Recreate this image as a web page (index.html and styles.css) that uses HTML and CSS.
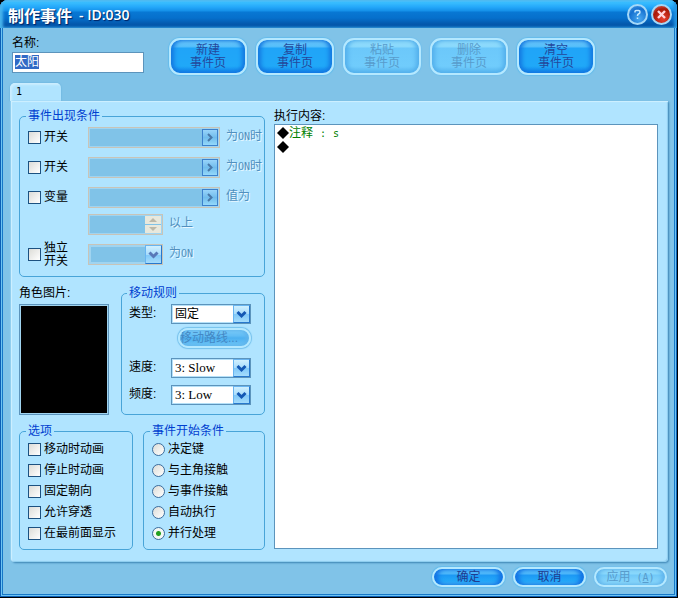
FILE: index.html
```html
<!DOCTYPE html>
<html lang="zh-CN">
<head>
<meta charset="utf-8">
<title>制作事件 - ID:030</title>
<link rel="stylesheet" href="styles.css">
</head>
<body>
<main class="window">
  <header class="titlebar">
    <h1><span>制作事件</span><span class="title-id">- ID:030</span></h1>
    <button class="round help" type="button" aria-label="帮助">
      <svg viewBox="0 0 17 17"><path d="M6 6.5V5.500Q6 4.500 7 4.500H9.500Q11 4.500 11 6Q11 7.500 9.500 8Q8.500 8.500 8.500 10M8.500 11.500V13" fill="none" stroke="#c4e8ff" stroke-width="1.500"/></svg>
    </button>
    <button class="round close" type="button" aria-label="关闭">
      <svg viewBox="0 0 17 17"><path d="M5 5L12 12M12 5L5 12" fill="none" stroke="#ffd5dc" stroke-width="2.400"/></svg>
    </button>
  </header>

  <section class="top">
    <div class="name">
      <label for="name">名称:</label>
      <div class="name-box"><input id="name" type="text" value="太阳" autofocus></div>
    </div>
    <div class="page-buttons">
      <button class="page-btn" type="button">新建<br>事件页</button>
      <button class="page-btn" type="button">复制<br>事件页</button>
      <button class="page-btn" type="button" disabled>粘贴<br>事件页</button>
      <button class="page-btn" type="button" disabled>删除<br>事件页</button>
      <button class="page-btn" type="button">清空<br>事件页</button>
    </div>
  </section>

  <nav class="tabs"><button class="tab" type="button">1</button></nav>

  <section class="panel">
    <div class="settings">
      <fieldset class="conditions">
        <legend>事件出现条件</legend>
        <div class="cond-grid">
          <label class="check"><input type="checkbox">开关</label>
          <div class="well picker"><button type="button" disabled aria-label="选择开关"><svg viewBox="0 0 14 15"><path d="M5 4L8.500 7.500L5 11"/></svg></button></div>
          <span class="dim">为<span class="half">ON</span>时</span>

          <label class="check"><input type="checkbox">开关</label>
          <div class="well picker"><button type="button" disabled aria-label="选择开关"><svg viewBox="0 0 14 15"><path d="M5 4L8.500 7.500L5 11"/></svg></button></div>
          <span class="dim">为<span class="half">ON</span>时</span>

          <label class="check"><input type="checkbox">变量</label>
          <div class="well picker"><button type="button" disabled aria-label="选择变量"><svg viewBox="0 0 14 15"><path d="M5 4L8.500 7.500L5 11"/></svg></button></div>
          <span class="dim">值为</span>

          <div class="short">
            <div class="well spinner">
              <input type="text" disabled aria-label="变量值">
              <span class="steps">
                <button type="button" disabled aria-label="增加"><svg viewBox="0 0 16 8"><path d="M4 6L8 2L12 6Z"/></svg></button>
                <button type="button" disabled aria-label="减少"><svg viewBox="0 0 16 8"><path d="M4 2L8 6L12 2Z"/></svg></button>
              </span>
            </div>
            <span class="dim">以上</span>
          </div>

          <label class="check"><input type="checkbox"><span>独立<br>开关</span></label>
          <div class="short">
            <span class="combo off">
              <select disabled aria-label="独立开关"><option></option></select>
              <span class="arrow"><svg viewBox="0 0 15 17"><path d="M3.500 6.500L7.500 10.500L11.500 6.500"/></svg></span>
            </span>
            <span class="dim">为<span class="half">ON</span></span>
          </div>
        </div>
      </fieldset>

      <div class="middle">
        <div class="portrait">
          <span>角色图片:</span>
          <div class="picture"></div>
        </div>
        <fieldset class="move">
          <legend>移动规则</legend>
          <div class="move-grid">
            <label for="type">类型:</label>
            <span class="combo">
              <select id="type"><option>固定</option></select>
              <span class="arrow"><svg viewBox="0 0 15 16"><path d="M3.500 6L7.500 10L11.500 6"/></svg></span>
            </span>
            <button class="pill route" type="button" disabled>移动路线...</button>
            <label for="speed">速度:</label>
            <span class="combo">
              <select id="speed" class="latin"><option>3: Slow</option></select>
              <span class="arrow"><svg viewBox="0 0 15 16"><path d="M3.500 6L7.500 10L11.500 6"/></svg></span>
            </span>
            <label for="freq">频度:</label>
            <span class="combo">
              <select id="freq" class="latin"><option>3: Low</option></select>
              <span class="arrow"><svg viewBox="0 0 15 16"><path d="M3.500 6L7.500 10L11.500 6"/></svg></span>
            </span>
          </div>
        </fieldset>
      </div>

      <div class="bottom">
        <fieldset class="choices">
          <legend>选项</legend>
          <label class="check"><input type="checkbox">移动时动画</label>
          <label class="check"><input type="checkbox">停止时动画</label>
          <label class="check"><input type="checkbox">固定朝向</label>
          <label class="check"><input type="checkbox">允许穿透</label>
          <label class="check"><input type="checkbox">在最前面显示</label>
        </fieldset>
        <fieldset class="choices">
          <legend>事件开始条件</legend>
          <label class="check"><input type="radio" name="trigger">决定键</label>
          <label class="check"><input type="radio" name="trigger">与主角接触</label>
          <label class="check"><input type="radio" name="trigger">与事件接触</label>
          <label class="check"><input type="radio" name="trigger">自动执行</label>
          <label class="check"><input type="radio" name="trigger" checked>并行处理</label>
        </fieldset>
      </div>
    </div>

    <div class="commands">
      <span>执行内容:</span>
      <ul class="list">
        <li><svg class="mark" viewBox="0 0 12 12"><path d="M6 0L12 6L6 12L0 6Z"/></svg><span class="comment">注释<span class="tail">:</span><span class="tail">s</span></span></li>
        <li><svg class="mark" viewBox="0 0 12 12"><path d="M6 0L12 6L6 12L0 6Z"/></svg></li>
      </ul>
    </div>
  </section>

  <footer class="footer">
    <button class="pill" type="button">确定</button>
    <button class="pill" type="button">取消</button>
    <button class="pill" type="button" disabled>应用<span class="half"> (<u>A</u>)</span></button>
  </footer>
</main>
<script src="script.js"></script>
</body>
</html>
```
FILE: styles.css
```css
* { box-sizing: border-box; }

body {
  margin: 0;
  padding: 0 1px 1px 0;
  min-height: 100vh;
  display: flex;
  background: #000;
  color: #000;
  font: 12px/14px "Liberation Sans", "Noto Sans CJK SC", sans-serif;
}

button, input, select {
  font: inherit;
  margin: 0;
  padding: 0;
}

svg { display: block; }

.window {
  flex: 1;
  display: flex;
  flex-direction: column;
  background: #80c3e8;
  border-radius: 8px 8px 0 0;
  overflow: hidden;
  box-shadow: inset 0 0 0 1px #0c5fb4, inset 0 0 0 2px #6cc4f4, inset 0 0 0 3px #1678c8;
}

/* Title bar */
.titlebar {
  display: flex;
  align-items: center;
  gap: 3px;
  height: 28px;
  padding: 1px 5px 0 8px;
  background: linear-gradient(#80dcff 0, #3cc0ff 2px, #24a8fa 7px, #1490e8 11px, #0878d4 12px, #0670cc 18px, #0458ac 24px, #0454a8 28px);
  box-shadow: inset 3px 0 3px #48b4ec, inset -3px 0 3px #2494e0;
}

h1 {
  flex: 1;
  display: flex;
  gap: 7px;
  margin: 0;
  color: #fff;
  font: bold 16px/20px "Noto Sans CJK SC", sans-serif;
  text-shadow: 1px 1px 1px #002060;
}

.title-id { font: 600 14px/20px "Open Sans", sans-serif; }

.round {
  width: 21px;
  height: 21px;
  border: 2px solid #a4d8f8;
  border-radius: 50%;
}

.help { background: radial-gradient(circle at 60% 75%, #48a8f0, #1470d0 60%, #58a8e8); }
.close { background: radial-gradient(circle at 60% 75%, #e84030, #a81808 60%, #e88070); }

/* Name and page buttons */
.top {
  display: flex;
  gap: 25px;
  padding: 8px 12px 0;
}

.name {
  flex: 0 0 132px;
  display: flex;
  flex-direction: column;
  gap: 2px;
}

.name-box {
  height: 21px;
  padding: 2px;
  border: 1px solid #5c94bc;
  background: #fff;
}

.name-box input {
  display: block;
  width: 100%;
  height: 14px;
  border: 0;
  outline: 0;
  background: none;
}

.name-box input::selection { background: #316ac5; color: #fff; }

.page-buttons {
  display: flex;
  gap: 9px;
  padding-top: 2px;
}

.page-btn {
  width: 78px;
  height: 37px;
  border: 2px solid #b4e8ff;
  border-radius: 11px;
  background: linear-gradient(#78d0fc 0, #50bcfa 7px, #20a4f8 8px, #20a8f8 26px, #1080e8 33px);
  box-shadow: inset 3px 0 4px #1478e0, inset -3px 0 4px #1478e0, 0 0 1px 1px #64bcec;
  color: #24489c;
  line-height: 13px;
}

.page-btn:disabled {
  background: linear-gradient(#98e0fc 0, #88d8fc 7px, #6cc8fa 8px, #70ccfc 26px, #5cb8f0 33px);
  box-shadow: inset 3px 0 4px #54b0ec, inset -3px 0 4px #54b0ec, 0 0 1px 1px #74c0ec;
  color: #589ccc;
}

/* Tabs */
.tabs {
  padding: 8px 10px 0;
  height: 26px;
}

.tab {
  display: block;
  width: 51px;
  height: 18px;
  padding-left: 6px;
  border: 0;
  border-radius: 5px 5px 0 0;
  background: #b0e4ff;
  box-shadow: inset 2px 2px 2px #cceeff, 0 0 2px #5cacd8;
  font: 10px/18px "DejaVu Sans Mono", monospace;
  text-align: left;
}

.panel {
  flex: 1;
  display: flex;
  gap: 9px;
  margin: 0 9px 0 11px;
  padding: 8px 10px 11px 8px;
  background: #b0e4ff;
  border-radius: 0 0 4px 4px;
  box-shadow: inset 1px 1px 1px #d0f0ff, inset -1px -1px 1px #8ccbee, 1px 1px 2px #3c84b4, -1px 0 1px #98d4f4;
}

.settings {
  flex: 0 0 246px;
  display: flex;
  flex-direction: column;
  gap: 9px;
}

fieldset {
  min-width: 0;
  margin: 0;
  padding: 0 8px;
  border: 1px solid #48a4d8;
  border-radius: 5px;
}

legend {
  margin-left: -2px;
  padding: 0 2px;
  color: #0040d0;
}

/* Conditions */
.conditions { padding: 4px 0 11px 8px; }

.cond-grid {
  display: grid;
  grid-template-columns: 60px 132px 1fr;
  grid-template-rows: 30px 30px 27px 30px 21px;
  align-items: start;
}

.cond-grid .dim { padding: 2px 0 0 6px; white-space: nowrap; }

.check {
  display: flex;
  align-items: center;
  gap: 3px;
  height: 21px;
  line-height: 13px;
  white-space: nowrap;
}

.check input {
  appearance: none;
  flex: none;
  width: 13px;
  height: 13px;
  border: 1px solid #1c5180;
  background: linear-gradient(135deg, #dcdcd7, #fff);
}

.check input[type="radio"] {
  border-color: #3c6c9c;
  border-radius: 50%;
}

.check input[type="radio"]:checked {
  background: radial-gradient(circle, #24a020 0, #24a020 2px, #f4f8f4 3px);
}

.well {
  height: 21px;
  padding: 1px;
  border: 1px solid #c8c4b8;
  background: #80c3e8;
  box-shadow: inset 0 0 0 1px #a0d4f0;
}

.picker {
  display: flex;
  justify-content: flex-end;
}

.picker button {
  width: 16px;
  height: 17px;
  border: 1px solid #3c80cc;
  background: linear-gradient(#98d4fa, #70bcec 50%, #94d8fa);
}

.picker path, .arrow path {
  fill: none;
  stroke: #4878a8;
  stroke-width: 2;
}

.dim {
  color: #5090c0;
  text-shadow: 1px 1px 0 #e8f8ff;
}

.half { font: 10px/14px "DejaVu Sans Mono", monospace; }

.short {
  grid-column: 2 / 4;
  display: flex;
}

.spinner {
  display: flex;
  width: 75px;
}

.spinner input {
  flex: 1;
  min-width: 0;
  border: 0;
  background: none;
}

.steps {
  display: grid;
  gap: 1px;
  width: 16px;
}

.steps button {
  height: 8px;
  border: 0;
  background: #e8e8dc;
}

.steps path { fill: #bcb8a8; }

.combo {
  display: flex;
  height: 20px;
  border: 1px solid #5c94bc;
  background: #fff;
  box-shadow: inset 0 0 0 1px #b4e0f8;
}

.combo select {
  flex: 1;
  min-width: 0;
  appearance: none;
  margin-right: -17px;
  padding: 0 18px 0 3px;
  border: 0;
  background: none;
  color: #000;
}

.combo .latin { font: 13px/14px "Liberation Serif", serif; }

.arrow {
  flex: none;
  width: 17px;
  border: 1px solid #2878cc;
  border-top-color: #68b4f0;
  border-left-color: #68b4f0;
  background: linear-gradient(#d0f0ff, #a8dcfc 50%, #80c8f8 51%, #a4dcfc);
  pointer-events: none;
}

.arrow path { stroke: #1458b4; stroke-width: 3; }

.off {
  width: 75px;
  height: 21px;
  border-color: #c8c4b8;
  background: #80c3e8;
  box-shadow: inset 0 0 0 2px #a0d4f0;
}

.off .arrow path { stroke: #5878b8; }

/* Portrait and movement */
.middle {
  display: flex;
  gap: 12px;
}

.portrait {
  flex: 0 0 90px;
  display: flex;
  flex-direction: column;
  gap: 4px;
}

.picture {
  flex: 1;
  border: 1px solid #5c94bc;
  background: #000;
  box-shadow: inset 0 0 0 1px #a0d4f0;
}

.move {
  flex: 1;
  padding: 4px 13px 9px 7px;
}

.move legend { margin-left: -2px; }

.move-grid {
  display: grid;
  grid-template-columns: 42px 1fr;
  grid-template-rows: 24px 30px 27px 20px;
  align-items: start;
}

.move-grid label { line-height: 18px; }

.pill {
  width: 73px;
  height: 20px;
  border: 2px solid #b4e8ff;
  border-radius: 10px;
  background: linear-gradient(#60c4fc, #4cb8fa 5px, #1c98f4 6px, #24a8f8 12px, #4cc4fc);
  box-shadow: inset 4px 0 4px #1474e4, inset -4px 0 4px #1474e4, 0 0 1px 1px #64bcec;
  color: #203c90;
  line-height: 14px;
  white-space: nowrap;
}

.pill:disabled {
  background: linear-gradient(#98e0fc, #88d8fc 5px, #70c8f8 6px, #90dcfc);
  box-shadow: inset 3px 0 4px #60b4ec, inset -3px 0 4px #60b4ec, 0 0 1px 1px #74c0ec;
  color: #589ccc;
}

.route {
  grid-column: 2;
  justify-self: end;
  overflow: hidden;
  text-align: left;
}

.route:disabled {
  background: linear-gradient(#80d0fc, #60bcf4 6px, #4cb0f0 8px, #70c8f8);
  color: #4488c4;
}

/* Options and trigger */
.bottom {
  display: grid;
  grid-template-columns: 114px 122px;
  column-gap: 10px;
}

.choices { padding: 1px 0 5px 8px; }

/* Command list */
.commands {
  flex: 1;
  display: flex;
  flex-direction: column;
  gap: 1px;
  min-width: 0;
  padding-bottom: 2px;
}

.list {
  flex: 1;
  margin: 0;
  padding: 1px 2px;
  border: 1px solid #5c94bc;
  background: #fff;
  list-style: none;
}

.list li {
  display: flex;
  align-items: center;
  height: 14px;
}

.mark { width: 12px; height: 12px; }

.comment { color: #008000; }

.tail {
  padding-left: 7px;
  font: 10px/14px "DejaVu Sans Mono", monospace;
}

/* Footer */
.footer {
  display: flex;
  justify-content: flex-end;
  gap: 8px;
  padding: 5px 10px 10px;
}
```
FILE: script.js
```js
const nameInput = document.getElementById('name');
nameInput.focus();
nameInput.select();
```
